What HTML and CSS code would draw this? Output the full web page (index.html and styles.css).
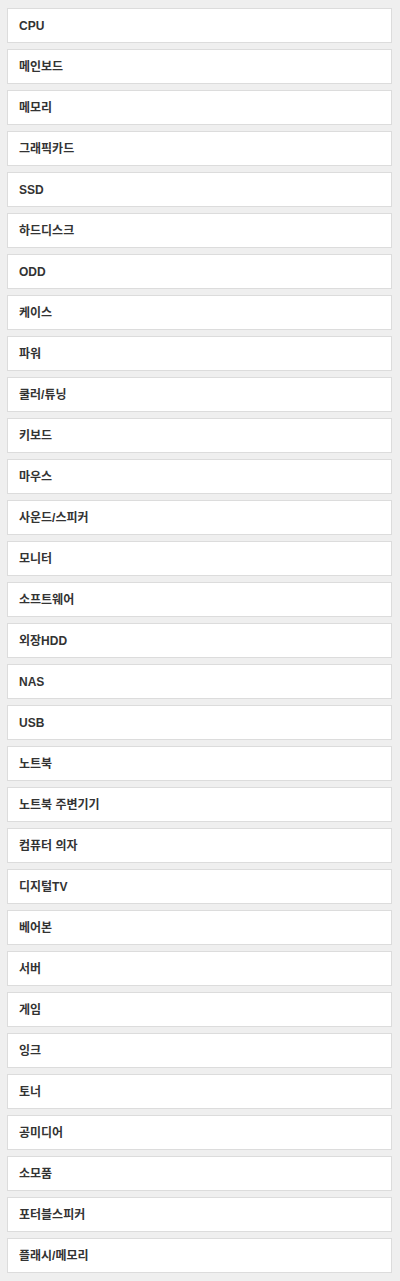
FILE: index.html
```html
<!DOCTYPE html>
<html lang="ko">
<head>
<meta charset="utf-8">
<title>카테고리</title>
<link rel="stylesheet" href="styles.css">
</head>
<body>
<ul class="cat-list">
<li class="cat-item">CPU</li>
<li class="cat-item">메인보드</li>
<li class="cat-item">메모리</li>
<li class="cat-item">그래픽카드</li>
<li class="cat-item">SSD</li>
<li class="cat-item">하드디스크</li>
<li class="cat-item">ODD</li>
<li class="cat-item">케이스</li>
<li class="cat-item">파워</li>
<li class="cat-item">쿨러/튜닝</li>
<li class="cat-item">키보드</li>
<li class="cat-item">마우스</li>
<li class="cat-item">사운드/스피커</li>
<li class="cat-item">모니터</li>
<li class="cat-item">소프트웨어</li>
<li class="cat-item">외장HDD</li>
<li class="cat-item">NAS</li>
<li class="cat-item">USB</li>
<li class="cat-item">노트북</li>
<li class="cat-item">노트북 주변기기</li>
<li class="cat-item">컴퓨터 의자</li>
<li class="cat-item">디지털TV</li>
<li class="cat-item">베어본</li>
<li class="cat-item">서버</li>
<li class="cat-item">게임</li>
<li class="cat-item">잉크</li>
<li class="cat-item">토너</li>
<li class="cat-item">공미디어</li>
<li class="cat-item">소모품</li>
<li class="cat-item">포터블스피커</li>
<li class="cat-item">플래시/메모리</li>
</ul>
</body>
</html>
```
FILE: styles.css
```css
html, body {
  margin: 0;
  padding: 0;
  background: #efefef;
}
body {
  font-family: "Liberation Sans", "Noto Sans CJK KR", sans-serif;
  font-size: 12px;
  font-weight: bold;
  color: #333;
}
.cat-list {
  list-style: none;
  margin: 0;
  padding: 8px 8px 7px 7px;
  display: flex;
  flex-direction: column;
  gap: 6px;
}
.cat-item {
  box-sizing: border-box;
  height: 35px;
  background: #fff;
  border: 1px solid #dcdcdc;
  padding: 0 11px;
  display: flex;
  align-items: center;
  line-height: 1;
}
```
